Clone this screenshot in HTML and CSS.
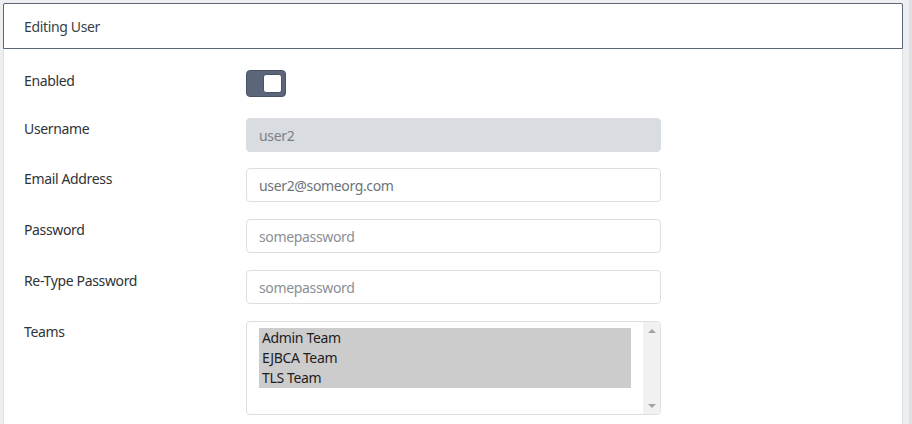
FILE: index.html
```html
<!DOCTYPE html>
<html lang="en">
<head>
<meta charset="utf-8">
<title>Editing User</title>
<link rel="stylesheet" href="styles.css">
</head>
<body>
<div class="page">
  <div class="card">
    <div class="card-header">Editing User</div>
    <form class="card-body">
      <div class="row row-toggle">
        <label class="label">Enabled</label>
        <div class="field">
          <span class="toggle"><span class="knob"></span></span>
        </div>
      </div>
      <div class="row row-first">
        <label class="label">Username</label>
        <div class="field"><div class="input input-disabled">user2</div></div>
      </div>
      <div class="row">
        <label class="label">Email Address</label>
        <div class="field"><div class="input">user2@someorg.com</div></div>
      </div>
      <div class="row">
        <label class="label">Password</label>
        <div class="field"><div class="input placeholder">somepassword</div></div>
      </div>
      <div class="row">
        <label class="label">Re-Type Password</label>
        <div class="field"><div class="input placeholder">somepassword</div></div>
      </div>
      <div class="row">
        <label class="label">Teams</label>
        <div class="field">
          <div class="listbox">
            <div class="options">
              <div class="option">Admin Team</div>
              <div class="option">EJBCA Team</div>
              <div class="option">TLS Team</div>
            </div>
            <div class="scrollbar">
              <span class="arrow up"></span>
              <span class="arrow down"></span>
            </div>
          </div>
        </div>
      </div>
    </form>
  </div>
</div>
</body>
</html>
```
FILE: styles.css
```css
html, body {
  margin: 0;
  padding: 0;
  height: 100%;
}
body {
  background: #eceef1;
  font-family: "Noto Sans", "Open Sans", sans-serif;
  font-size: 14px;
  letter-spacing: -0.35px;
  color: #2b2f33;
  overflow: hidden;
}
.page {
  padding: 3px 6px 0 3px;
  border-right: 3px solid #dedfe1;
  height: 100%;
  box-sizing: border-box;
}
.card {
  background: #fff;
  border-left: 1px solid #dcdfe3;
  border-right: 1px solid #dcdfe3;
  height: 100%;
  box-sizing: border-box;
}
.card-header {
  margin: 0 -1px;
  height: 46px;
  box-sizing: border-box;
  border: 1px solid #5d6677;
  border-radius: 2px 2px 0 0;
  padding: 0 20px;
  display: flex;
  align-items: center;
  color: #3a3f45;
  line-height: 21px;
}
.card-body {
  padding: 21px 20px 0 20px;
  margin: 0;
}
.row {
  display: flex;
  align-items: flex-start;
  margin-bottom: 17px;
}
.row-first {
  margin-bottom: 16px;
}
.row-toggle {
  min-height: 31px;
  margin-bottom: 17px;
}
.label {
  width: 222px;
  flex: none;
  line-height: 21px;
  padding-top: 0;
  color: #2f3338;
}
.field {
  width: 415px;
}
.toggle {
  display: flex;
  justify-content: flex-end;
  align-items: center;
  width: 40px;
  height: 27px;
  box-sizing: border-box;
  background: #5c667a;
  border: 1px solid #4a5366;
  border-radius: 4px;
  padding: 0 3px;
}
.knob {
  width: 19px;
  height: 19px;
  box-sizing: border-box;
  background: #fff;
  border: 1px solid #4a5366;
  border-radius: 3px;
}
.input {
  height: 34px;
  box-sizing: border-box;
  border: 1px solid #dcdfe4;
  border-radius: 4px;
  padding: 0 12px;
  display: flex;
  align-items: center;
  color: #6d737a;
  background: #fff;
}
.input-disabled {
  background: #d9dce1;
  border-color: #d9dce1;
  color: #7b8088;
}
.placeholder {
  color: #8a8f96;
}
.listbox {
  height: 94px;
  box-sizing: border-box;
  border: 1px solid #dcdfe4;
  border-radius: 4px;
  display: flex;
  overflow: hidden;
}
.options {
  flex: 1;
  padding: 6px 12px 0 12px;
}
.option {
  background: #cccccc;
  color: #1e1e1e;
  height: 20px;
  line-height: 20px;
  padding-left: 3px;
}
.scrollbar {
  width: 17px;
  flex: none;
  background: #f1f1f1;
  display: flex;
  flex-direction: column;
  justify-content: space-between;
  align-items: center;
  padding: 7px 0 6px;
}
.arrow {
  width: 0;
  height: 0;
  border-left: 4px solid transparent;
  border-right: 4px solid transparent;
}
.arrow.up {
  border-bottom: 4px solid #a3a3a3;
}
.arrow.down {
  border-top: 4px solid #a3a3a3;
}
```
